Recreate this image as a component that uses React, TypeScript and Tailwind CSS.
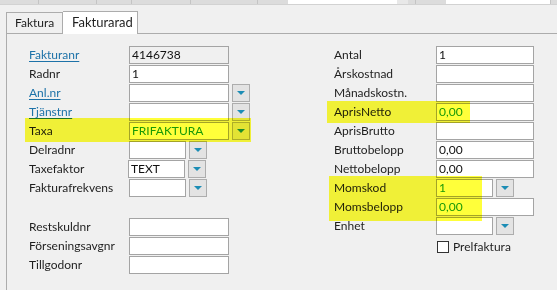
import { ReactNode } from 'react'

function Arrow() {
    return (
        <svg width="8" height="4" viewBox="0 0 8 4"><polygon points="0,0 8,0 4,4" fill="#1c8db5" /></svg>
    )
}

function Box({ value, width, readOnly, green }: { value?: string; width: number; readOnly?: boolean; green?: boolean }) {
    return (
        <div
            className={`h-[18px] border border-[#a4a4a4] flex items-center pl-[2px] leading-none ${readOnly ? 'bg-[#f0f0f0]' : 'bg-white'} ${green ? 'text-[#1a9a1a]' : 'text-[#111]'}`}
            style={{ width }}
        >
            {value}
        </div>
    )
}

function DropBtn() {
    return (
        <div className="w-[18px] h-[18px] border border-[#adadad] bg-[#e3e3e3] flex items-center justify-center ml-[3px]">
            <Arrow />
        </div>
    )
}

function Row({ label, link, labelWidth, children }: { label: string; link?: boolean; labelWidth: number; children?: ReactNode }) {
    return (
        <div className="h-[19px] flex items-start">
            <div
                className={`h-[18px] flex items-center shrink-0 ${link ? 'text-[#1d72a8] underline underline-offset-2' : 'text-[#1e1e1e]'}`}
                style={{ width: labelWidth }}
            >
                {label}
            </div>
            <div className="flex">{children}</div>
        </div>
    )
}

export default function App() {
    return (
        <div className="w-[557px] h-[290px] bg-[#f0f0f0] relative overflow-hidden text-[12px]" style={{ fontFamily: 'Lato, "Liberation Sans", sans-serif' }}>
            {/* top strip from window above */}
            <div className="h-[5px] border-b border-[#d2d2d2] flex bg-[#dcdcdc]">
                <div className="w-[39px] border-r border-[#c4c4c4]" />
                <div className="w-[58px] border-r border-[#c4c4c4]" />
                <div className="w-[35px] border-r border-[#c4c4c4]" />
                <div className="w-[59px] border-r border-[#c4c4c4]" />
                <div className="w-[67px] border-r border-[#c4c4c4]" />
                <div className="w-[30px]" />
                <div className="w-[109px] bg-white" />
                <div className="w-[11px] bg-[#e8e8e8]" />
                <div className="w-[8px] border-r border-[#c4c4c4]" />
                <div className="w-[30px]" />
                <div className="w-[104px] bg-white" />
                <div className="flex-1 border-l border-[#c4c4c4]" />
            </div>

            {/* tabs */}
            <div className="flex items-end pt-[6px] pl-[6px]">
                <div className="w-[57px] h-[22px] border border-[#acacac] bg-[#f0f0f0] flex items-center pl-[8px] text-[#1e1e1e]">Faktura</div>
                <div className="w-[75px] h-[23px] border border-b-0 border-l-0 border-[#acacac] bg-white flex items-center pl-[9px] pb-[1px] text-[#1e1e1e] text-[13px]">Fakturarad</div>
                <div className="flex-1 border-b border-[#acacac]" />
            </div>

            {/* panel */}
            <div className="ml-[6px] border-l border-[#acacac] h-[260px] pt-[12px] pl-[22px] flex">
                <div className="w-[305px] flex flex-col">
                    <Row label="Fakturanr" link labelWidth={100}><Box value="4146738" width={100} readOnly /></Row>
                    <Row label="Radnr" labelWidth={100}><Box value="1" width={100} /></Row>
                    <Row label="Anl.nr" link labelWidth={100}><Box width={100} /><DropBtn /></Row>
                    <Row label="Tjänstnr" link labelWidth={100}><Box width={100} /><DropBtn /></Row>
                    <Row label="Taxa" labelWidth={100}><Box value="FRIFAKTURA" width={100} green /><DropBtn /></Row>
                    <Row label="Delradnr" labelWidth={100}><Box width={57} /><DropBtn /></Row>
                    <Row label="Taxefaktor" labelWidth={99}><Box value="TEXT" width={57} /><DropBtn /></Row>
                    <Row label="Fakturafrekvens" labelWidth={100}><Box width={57} /><DropBtn /></Row>
                    <div className="h-[20px]" />
                    <Row label="Restskuldnr" labelWidth={100}><Box width={100} /></Row>
                    <Row label="Förseningsavgnr" labelWidth={100}><Box width={100} /></Row>
                    <Row label="Tillgodonr" labelWidth={100}><Box width={100} /></Row>
                </div>
                <div className="flex flex-col">
                    <Row label="Antal" labelWidth={102}><Box value="1" width={98} /></Row>
                    <Row label="Årskostnad" labelWidth={102}><Box width={98} /></Row>
                    <Row label="Månadskostn." labelWidth={102}><Box width={98} /></Row>
                    <Row label="AprisNetto" labelWidth={102}><Box value="0,00" width={98} green /></Row>
                    <Row label="AprisBrutto" labelWidth={102}><Box width={98} /></Row>
                    <Row label="Bruttobelopp" labelWidth={102}><Box value="0,00" width={98} /></Row>
                    <Row label="Nettobelopp" labelWidth={102}><Box value="0,00" width={98} /></Row>
                    <Row label="Momskod" labelWidth={102}><Box value="1" width={57} green /><DropBtn /></Row>
                    <Row label="Momsbelopp" labelWidth={102}><Box value="0,00" width={98} green /></Row>
                    <Row label="Enhet" labelWidth={102}><Box width={57} /><DropBtn /></Row>
                    <div className="flex items-center mt-[4px] pl-[103px] h-[14px]">
                        <div className="w-[12px] h-[12px] border border-[#333] bg-white" />
                        <span className="ml-[4px] text-[#1e1e1e]">Prelfaktura</span>
                    </div>
                </div>
            </div>

            {/* highlighter marks */}
            <div className="absolute left-[25px] top-[118px] w-[226px] h-[24px] bg-[#ffff3a] mix-blend-multiply" />
            <div className="absolute left-[327px] top-[101px] w-[143px] h-[22px] bg-[#ffff3a] mix-blend-multiply" />
            <div className="absolute left-[329px] top-[176px] w-[153px] h-[45px] bg-[#ffff3a] mix-blend-multiply" />
        </div>
    )
}
